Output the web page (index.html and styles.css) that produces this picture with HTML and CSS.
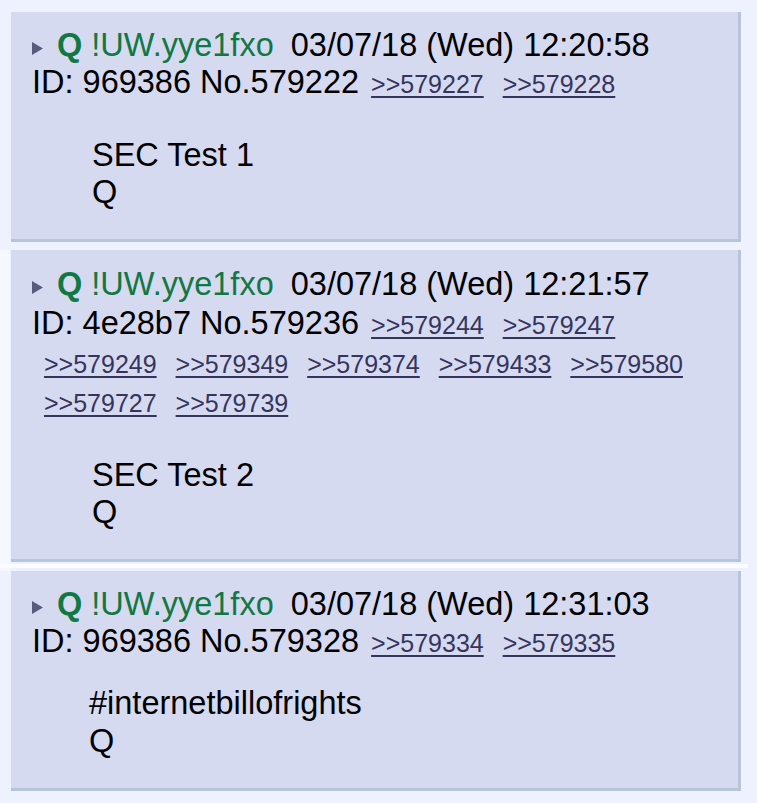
FILE: index.html
```html
<!DOCTYPE html>
<html lang="en">
<head>
    <meta charset="UTF-8">
    <meta name="viewport" content="width=device-width, initial-scale=1.0">
    <title>Thread</title>
    <link rel="stylesheet" href="styles.css">
</head>
<body>
    <div class="thread">
        <div class="post-row">
            <div class="post">
                <div class="post-info">
                    <span class="menu-btn"><svg width="11" height="13" viewBox="0 0 11 13"><polygon points="0,0 11,6.5 0,13" /></svg></span><span class="name">Q</span> <span class="trip">!UW.yye1fxo</span><span class="date">03/07/18 (Wed) 12:20:58</span><br>
                    ID: 969386 No.579222<span class="backlinks"><a href="#">&gt;&gt;579227</a> <a href="#">&gt;&gt;579228</a></span>
                </div>
                <blockquote class="message">SEC Test 1<br>Q</blockquote>
            </div>
        </div>

        <div class="post-row split">
            <div class="post">
                <div class="post-info wrapped">
                    <span class="menu-btn"><svg width="11" height="13" viewBox="0 0 11 13"><polygon points="0,0 11,6.5 0,13" /></svg></span><span class="name">Q</span> <span class="trip">!UW.yye1fxo</span><span class="date">03/07/18 (Wed) 12:21:57</span><br>
                    ID: 4e28b7 No.579236<span class="backlinks"><a href="#">&gt;&gt;579244</a> <a href="#">&gt;&gt;579247</a> <a href="#">&gt;&gt;579249</a> <a href="#">&gt;&gt;579349</a> <a href="#">&gt;&gt;579374</a> <a href="#">&gt;&gt;579433</a> <a href="#">&gt;&gt;579580</a> <a href="#">&gt;&gt;579727</a> <a href="#">&gt;&gt;579739</a></span>
                </div>
                <blockquote class="message">SEC Test 2<br>Q</blockquote>
            </div>
        </div>

        <div class="post-row">
            <div class="post">
                <div class="post-info">
                    <span class="menu-btn"><svg width="11" height="13" viewBox="0 0 11 13"><polygon points="0,0 11,6.5 0,13" /></svg></span><span class="name">Q</span> <span class="trip">!UW.yye1fxo</span><span class="date">03/07/18 (Wed) 12:31:03</span><br>
                    ID: 969386 No.579328<span class="backlinks"><a href="#">&gt;&gt;579334</a> <a href="#">&gt;&gt;579335</a></span>
                </div>
                <blockquote class="message tight">#internetbillofrights<br>Q</blockquote>
            </div>
        </div>
    </div>
</body>
</html>
```

FILE: styles.css
```css
body {
    font-family: "Liberation Sans", Arial, sans-serif;
    font-size: 32.5px;
    color: #000;
    margin: 0;
    padding: 12px 0 0 0;
    background-color: #eef2ff;
}
.thread {
    display: flex;
    flex-direction: column;
}
.post-row {
    padding: 0 0 8px 11px;
}
.post-row.split {
    padding-bottom: 0;
    background: linear-gradient(to right, #f6f8ff 0, #f6f8ff 10px, transparent 10px);
}
.post-row.split::after {
    content: "";
    display: block;
    width: 748px;
    height: 4px;
    margin: 2px 0 3px -11px;
    background-color: #fbfcff;
}
.post {
    width: 706px;
    background-color: #d6daf0;
    border-right: 3px solid #b7c5d9;
    border-bottom: 3px solid #b7c5d9;
    padding: 15px 0 28px 21px;
}
.post-info {
    line-height: 37px;
}
.post-info.wrapped {
    line-height: 39px;
}
.menu-btn {
    display: inline-block;
    width: 11px;
    margin-right: 14px;
    vertical-align: 1px;
}
.menu-btn svg {
    display: block;
    fill: #5b5b80;
}
.name {
    color: #117743;
    font-weight: bold;
}
.trip {
    color: #117743;
}
.date {
    margin-left: 17px;
}
.backlinks {
    font-size: 25px;
    line-height: 1;
}
.backlinks a {
    color: #34345c;
    margin-left: 12px;
    text-decoration: underline;
    text-decoration-thickness: 2px;
    text-underline-offset: 3px;
}
.message {
    margin: 36px 0 0 60px;
    line-height: 37px;
}
.message.tight {
    margin-top: 24px;
    margin-left: 57px;
    line-height: 38px;
}
```
